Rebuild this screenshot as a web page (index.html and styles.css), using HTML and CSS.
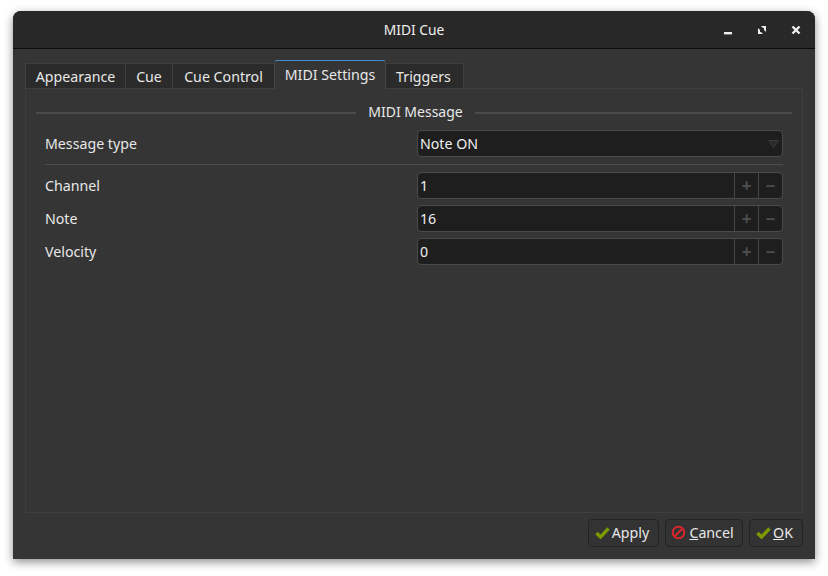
FILE: index.html
```html
<!DOCTYPE html>
<html lang="en">
<head>
  <meta charset="UTF-8" />
  <title>MIDI Cue</title>
  <link rel="stylesheet" href="styles.css">
</head>
<body>

  <div class="window">
    <div class="titlebar">
      <span class="title">MIDI Cue</span>
      <div class="win-buttons">
        <svg class="win-btn" width="16" height="16" viewBox="0 0 16 16"><rect x="4" y="10" width="8" height="2.400" fill="#eee"/></svg>
        <svg class="win-btn" width="16" height="16" viewBox="0 0 16 16"><path d="M7 4h5v6l-2-2V6H9zM4 6l2 2v2h1l2 2H4z" fill="#eee"/></svg>
        <svg class="win-btn" width="16" height="16" viewBox="0 0 16 16"><path d="M4.500 4.500l7 7M11.500 4.500l-7 7" stroke="#eee" stroke-width="2.400" fill="none"/></svg>
      </div>
    </div>

    <div class="content">
      <div class="tabs">
        <div class="tab">Appearance</div>
        <div class="tab tab-cue">Cue</div>
        <div class="tab tab-control">Cue Control</div>
        <div class="tab active">MIDI Settings</div>
        <div class="tab tab-triggers">Triggers</div>
      </div>

      <div class="pane">
        <div class="group-title"><span>MIDI Message</span></div>

        <div class="row row-first">
          <label>Message type</label>
          <div class="field">
            <span>Note ON</span>
            <svg class="arrow" width="11" height="8" viewBox="0 0 11 8"><path d="M0.500 0.500h10L5.500 7.500z" fill="#2a2a2a" stroke="#3a3a3a"/></svg>
          </div>
        </div>

        <div class="divider"></div>

        <div class="row">
          <label>Channel</label>
          <div class="field spin"><span class="value">1</span><span class="step">+</span><span class="step">−</span></div>
        </div>
        <div class="row">
          <label>Note</label>
          <div class="field spin"><span class="value">16</span><span class="step">+</span><span class="step">−</span></div>
        </div>
        <div class="row">
          <label>Velocity</label>
          <div class="field spin"><span class="value">0</span><span class="step">+</span><span class="step">−</span></div>
        </div>
      </div>

      <div class="actions">
        <button class="btn btn-apply">
          <svg width="15" height="13" viewBox="0 0 15 13"><path d="M1.500 7l4 4L13.500 2.500" stroke="#7a9a00" stroke-width="3.400" fill="none"/></svg>
          Apply
        </button>
        <button class="btn btn-cancel">
          <svg width="15" height="15" viewBox="0 0 15 15"><circle cx="7.500" cy="7.500" r="5.800" stroke="#d9262c" stroke-width="2" fill="none"/><path d="M3.500 11.500l8-8" stroke="#d9262c" stroke-width="2"/></svg>
          <span><u>C</u>ancel</span>
        </button>
        <button class="btn btn-ok">
          <svg width="15" height="13" viewBox="0 0 15 13"><path d="M1.500 7l4 4L13.500 2.500" stroke="#7a9a00" stroke-width="3.400" fill="none"/></svg>
          <span><u>O</u>K</span>
        </button>
      </div>
    </div>
  </div>

</body>
</html>
```

FILE: styles.css
```css
html, body {
  margin: 0;
  height: 576px;
  overflow: hidden;
  background: #fff;
}

body {
  font-family: "Noto Sans", sans-serif;
  font-size: 14.200px;
  color: #e8e8e8;
}

.window {
  width: 802px;
  height: 548px;
  margin: 11px 0 0 13px;
  background: #353535;
  border-radius: 8px 8px 0 0;
  box-shadow: 0 3px 10px rgba(0, 0, 0, 0.45);
  display: flex;
  flex-direction: column;
  overflow: hidden;
}

.titlebar {
  height: 38px;
  box-sizing: border-box;
  flex: none;
  background: #282828;
  border-bottom: 1px solid #0c0c0c;
  position: relative;
  display: flex;
  align-items: center;
  justify-content: center;
  color: #f0f0f0;
  padding-bottom: 1px;
  font-size: 13.800px;
}

.win-buttons {
  position: absolute;
  right: 11px;
  top: 11px;
  display: flex;
  gap: 18px;
}

.win-btn {
  display: block;
}

.content {
  flex: 1;
  display: flex;
  flex-direction: column;
  padding: 10px 12px 12px;
}

.tabs {
  display: flex;
  align-items: flex-end;
  height: 29px;
  flex: none;
}

.tab {
  height: 24px;
  line-height: 25px;
  background: #2b2b2b;
  border: 1px solid #3f3f3f;
  border-bottom: none;
  border-left-width: 0;
  text-align: center;
  box-sizing: content-box;
  width: 99px;
}

.tab:first-child {
  border-left-width: 1px;
  border-top-left-radius: 2px;
}

.tab-cue { width: 46px; }
.tab-control { width: 101px; }

.tab-triggers {
  width: 75px;
  padding-right: 2px;
  border-top-right-radius: 2px;
}

.tab.active {
  width: 110px;
  height: 28px;
  line-height: 28px;
  background: #353535;
  border-top: 1px solid #3f8fd0;
  border-right-color: #464646;
  border-left: 1px solid #464646;
  margin-left: -1px;
  border-radius: 3px 3px 0 0;
  position: relative;
  top: 1px;
  z-index: 1;
}

.pane {
  flex: 1;
  border: 1px solid #3f3f3f;
  padding: 14px 10px 0;
}

.group-title {
  display: flex;
  align-items: center;
  gap: 12px;
  height: 18px;
  font-size: 14px;
}

.group-title span {
  padding-bottom: 2px;
}

.group-title::before,
.group-title::after {
  content: "";
  height: 2px;
  background: #4b4b4b;
  position: relative;
  top: 1px;
}

.group-title::before { flex: 321; }
.group-title::after { flex: 318; }

.row {
  display: flex;
  align-items: center;
  justify-content: space-between;
  height: 27px;
  margin: 6px 9px 0;
}

.row-first {
  margin-top: 9px;
}

.field {
  width: 366px;
  height: 27px;
  box-sizing: border-box;
  background: #1e1e1e;
  border: 1px solid #4a4a4a;
  border-radius: 4px;
  display: flex;
  align-items: center;
  justify-content: space-between;
  padding-left: 2px;
  color: #eee;
}

.arrow {
  margin-right: 3px;
}

.value {
  flex: 1;
}

.step {
  width: 23px;
  height: 100%;
  border-left: 1px solid #464646;
  display: flex;
  align-items: center;
  justify-content: center;
  color: #4d4d4d;
  font-weight: bold;
  font-size: 17px;
}

.divider {
  height: 1px;
  background: #4b4b4b;
  margin: 7px 9px;
}

.actions {
  display: flex;
  justify-content: flex-end;
  gap: 6px;
  padding-top: 6px;
  flex: none;
}

.btn {
  height: 28px;
  box-sizing: border-box;
  background: #333;
  border: 1px solid #232323;
  border-radius: 4px;
  color: #e8e8e8;
  font: inherit;
  padding: 0 0 2px;
  display: flex;
  align-items: center;
  justify-content: center;
  gap: 3px;
}

.btn-apply { width: 71px; padding-right: 3px; gap: 2px; }
.btn-cancel { width: 78px; padding-right: 3px; }
.btn-ok { width: 54px; padding-right: 3px; gap: 2px; }
```
